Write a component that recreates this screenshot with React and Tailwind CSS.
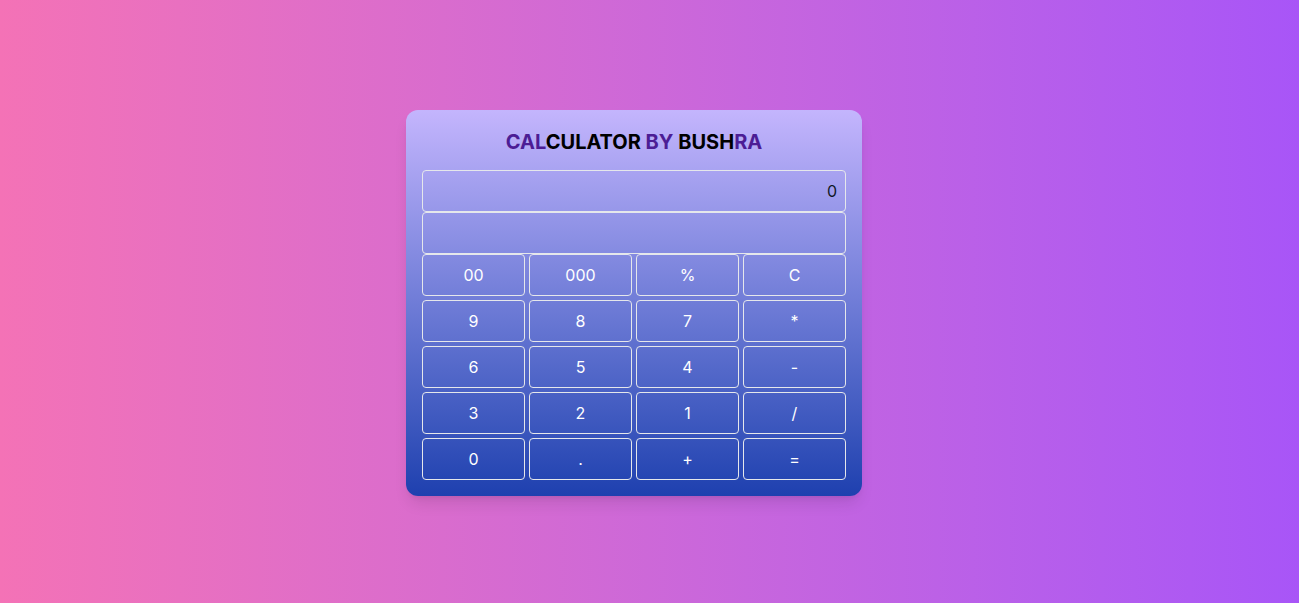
import { useState } from 'react';

const keys = [
    ['00', '000', '%', 'C'],
    ['9', '8', '7', '*'],
    ['6', '5', '4', '-'],
    ['3', '2', '1', '/'],
    ['0', '.', '+', '='],
];

const App = () => {
    const [value] = useState('0');
    const [expr] = useState('');

    return (
        <div className="min-h-screen flex items-center justify-center bg-gradient-to-r from-[#f472b6] to-[#a855f7] font-['Inter',sans-serif]">
            <div className="w-[456px] mr-[31px] mt-[2px] rounded-xl bg-gradient-to-b from-[#c4b5fd] to-[#1e40af] px-4 pt-4 pb-4 shadow-lg">
                <h1 className="text-center text-xl font-bold mb-[14px] mt-[2px] leading-[28px] text-black">
                    <span className="text-[#4c1d95]">CAL</span>CULATOR <span className="text-[#4c1d95]">BY</span> BUSH<span className="text-[#4c1d95]">RA</span>
                </h1>
                {/* display */}
                <div className="h-[42px] w-full rounded border border-gray-200 flex items-center justify-end px-2 text-gray-900">
                    {value}
                </div>
                <div className="h-[42px] w-full rounded border border-gray-200 flex items-center justify-end px-2 text-gray-900">
                    {expr}
                </div>
                <div className="grid grid-cols-4 gap-1">
                    {keys.flat().map((k) => (
                        <button
                            key={k}
                            className="h-[42px] rounded border border-gray-200 text-white text-base"
                        >
                            {k}
                        </button>
                    ))}
                </div>
            </div>
        </div>
    );
};

export default App;
